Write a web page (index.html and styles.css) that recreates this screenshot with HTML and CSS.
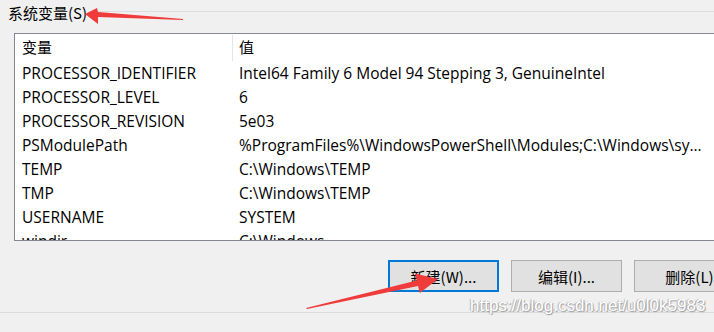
FILE: index.html
```html
<!DOCTYPE html>
<html lang="zh-CN">
<head>
<meta charset="utf-8">
<link rel="stylesheet" href="styles.css">
</head>
<body>
<div class="page">
  <div class="group-head">
    <span class="group-label">系统变量(S)</span>
    <span class="group-line"></span>
  </div>
  <div class="list">
    <div class="row head">
      <div class="c1">变量</div>
      <div class="sep"></div>
      <div class="c2">值</div>
    </div>
    <div class="row"><div class="c1">PROCESSOR_IDENTIFIER</div><div class="c2">Intel64 Family 6 Model 94 Stepping 3, GenuineIntel</div></div>
    <div class="row"><div class="c1">PROCESSOR_LEVEL</div><div class="c2">6</div></div>
    <div class="row"><div class="c1">PROCESSOR_REVISION</div><div class="c2">5e03</div></div>
    <div class="row"><div class="c1">PSModulePath</div><div class="c2">%ProgramFiles%\WindowsPowerShell\Modules;C:\Windows\sy...</div></div>
    <div class="row"><div class="c1">TEMP</div><div class="c2">C:\Windows\TEMP</div></div>
    <div class="row"><div class="c1">TMP</div><div class="c2">C:\Windows\TEMP</div></div>
    <div class="row"><div class="c1">USERNAME</div><div class="c2">SYSTEM</div></div>
    <div class="row"><div class="c1">windir</div><div class="c2">C:\Windows</div></div>
  </div>
  <div class="buttons">
    <button class="btn default">新建(W)...</button>
    <button class="btn">编辑(I)...</button>
    <button class="btn">删除(L)</button>
  </div>
  <div class="bottom-line"></div>
</div>
<div class="watermark">https://blog.csdn.net/u0l0k5983</div>
<svg class="arrows" width="714" height="332" viewBox="0 0 714 332">
  <polygon fill="#f03b3b" points="85,14 97,8 98,12 183,19 183,20 98,17 98,24"/>
  <polygon fill="#f03b3b" points="438,279 415,273.5 416.8,280.6 306,308 307,309 418,286 419.8,293"/>
</svg>
</body>
</html>
```
FILE: styles.css
```css
html, body {
  margin: 0;
  padding: 0;
  background: #f0f0f0;
  overflow: hidden;
  width: 714px;
  height: 332px;
}
body {
  position: relative;
  font-family: "Open Sans", "Noto Sans CJK SC", sans-serif;
  font-size: 15.5px;
  color: #000;
}
.page {
  padding-top: 3px;
}
.group-head {
  display: flex;
  align-items: center;
  height: 19px;
  padding-left: 8px;
}
.group-label {
  font-size: 15px;
  line-height: 19px;
  font-family: "Noto Sans CJK SC", sans-serif;
  white-space: nowrap;
}
.group-line {
  flex: 1;
  height: 0;
  border-top: 1px solid #dcdcdc;
  margin-left: 6px;
  margin-top: -3px;
}
.list {
  margin-top: 11px;
  margin-left: 14px;
  width: 760px;
  height: 206px;
  border: 1px solid #828790;
  background: #fff;
  overflow: hidden;
}
.row {
  display: flex;
  height: 24px;
  line-height: 24px;
  white-space: nowrap;
}
.row.head {
  height: 27px;
  line-height: 26px;
}
.head .c1, .head .c2 {
  font-family: "Noto Sans CJK SC", sans-serif;
  font-size: 15px;
}
.c1 {
  width: 210px;
  padding-left: 7px;
  flex: none;
}
.sep {
  width: 1px;
  background: #e5e5e5;
  margin-top: 1px;
  flex: none;
}
.c2 {
  padding-left: 7px;
}
.head .c2 {
  padding-left: 6px;
}
.buttons {
  display: flex;
  gap: 12px;
  padding-left: 388px;
  margin-top: 19px;
}
.btn {
  flex: none;
  width: 111px;
  height: 32px;
  background: #e1e1e1;
  border: 1px solid #adadad;
  font-family: "Noto Sans CJK SC", sans-serif;
  font-size: 15px;
  padding: 0;
  color: #000;
}
.btn.default {
  border: 2px solid #0078d7;
}
.bottom-line {
  margin-top: 20px;
  border-top: 1px solid #dcdcdc;
}
.watermark {
  position: absolute;
  left: 470px;
  top: 296px;
  font-family: "Liberation Sans", sans-serif;
  font-size: 17px;
  color: #fff;
  text-shadow: 1px 1px 1px #9a9a9a, -1px 0 1px #b0b0b0;
  white-space: nowrap;
}
.arrows {
  position: absolute;
  left: 0;
  top: 0;
}
```
